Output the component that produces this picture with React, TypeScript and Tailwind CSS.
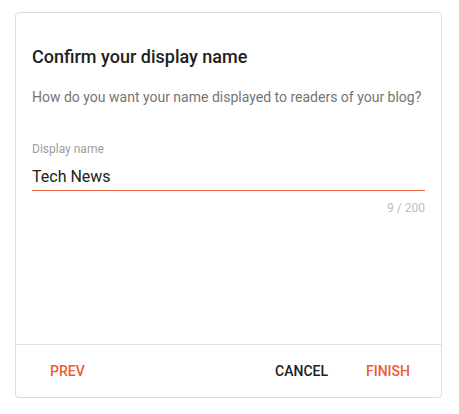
import React from "react";

export default function App() {
  return (
    <div className="w-[459px] h-[414px] bg-white pt-[12px] pl-[15px]" style={{ fontFamily: "Roboto, 'Liberation Sans', sans-serif" }}>
      <div className="w-[427px] h-[386px] border border-[#dadce0] rounded-[4px] flex flex-col bg-white">
        <div className="flex-1 px-4 pt-[32px] flex flex-col">
          <div className="text-[18px] leading-6 font-medium text-[#212121]">Confirm your display name</div>
          <div className="mt-[18px] text-[14px] leading-5 text-[#757575]">How do you want your name displayed to readers of your blog?</div>
          <div className="mt-[34px] text-[12px] leading-4 text-[#9e9e9e]">Display name</div>
          <div className="mt-[8px] text-[16px] leading-6 pb-[1px] text-[#212121]">Tech News</div>
          <div className="h-px bg-[#e8603a]" />
          <div className="mt-[9px] text-[12px] leading-4 text-[#bdbdbd] text-right">9 / 200</div>
        </div>
        <div className="h-[53px] border-t border-[#e0e0e0] flex items-center pl-[18px] pr-[15px]">
          <button className="px-4 text-[14px] font-medium text-[#f05a2e] leading-5">PREV</button>
          <div className="flex-1" />
          <button className="px-4 text-[14px] font-medium text-[#212121] leading-5">CANCEL</button>
          <button className="ml-[6px] px-4 text-[14px] font-medium text-[#f05a2e] leading-5">FINISH</button>
        </div>
      </div>
    </div>
  );
}
